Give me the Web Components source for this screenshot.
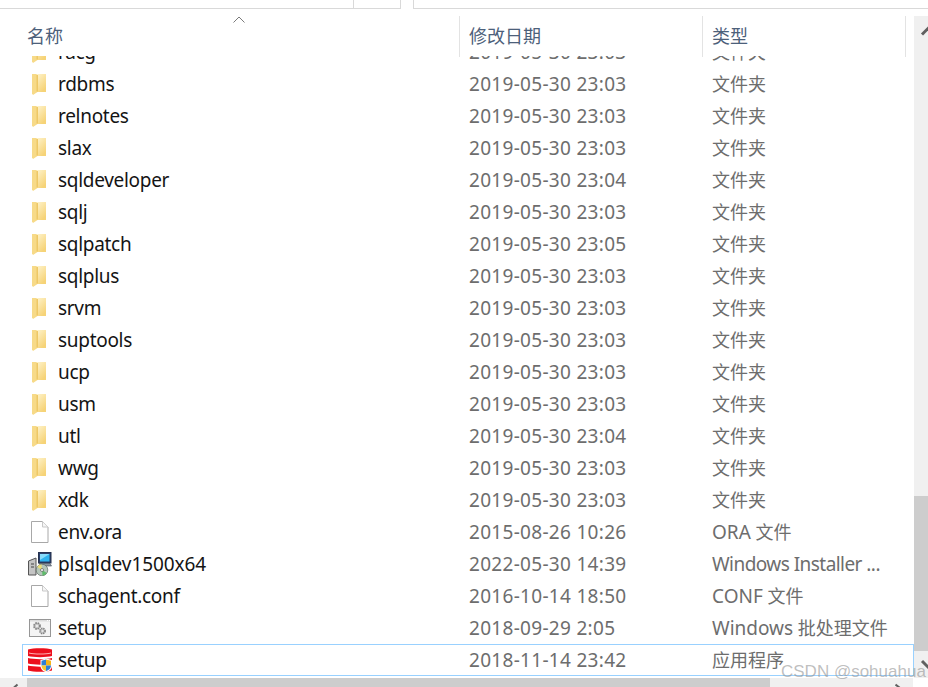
<!DOCTYPE html>
<html>
<head>
<meta charset="utf-8">
<style>
  html, body { margin: 0; padding: 0; background: #fff; }
  body { width: 928px; height: 687px; overflow: hidden; font-family: "Noto Sans", "Noto Sans CJK SC", sans-serif; }
</style>
</head>
<body>
<file-explorer></file-explorer>

<script>
// icons used by the rows, all 24x24
const ICONS = {
  folder: `<svg width="24" height="24" viewBox="0 0 24 24">
    <defs><linearGradient id="f" x1="0" x2=".6" y1="0" y2="1"><stop offset="0" stop-color="#fef3cb"/><stop offset="1" stop-color="#f6d377"/></linearGradient></defs>
    <path d="M9 2 H18 V20 H9Z" fill="url(#f)"/>
    <path d="M4 2 H8.500 L9.500 4 V20 L5 23 L4 21.500Z" fill="#f7da88"/>
    <path d="M8.500 3 H10 V19.500 H8.500Z" fill="#eec866"/>
  </svg>`,
  file: `<svg width="24" height="24" viewBox="0 0 24 24">
    <path d="M3.500 1.500 H14.500 L20 7 V22.500 H3.500Z" fill="#fff" stroke="#a8a8a8"/>
    <path d="M14.500 1.500 V7 H20" fill="#f6f6f6" stroke="#c8c8c8"/>
  </svg>`,
  installer: `<svg width="24" height="24" viewBox="0 0 24 24">
    <path d="M.5 9 L8 6 V23 H.5Z" fill="#c4c4c4" stroke="#555"/>
    <path d="M3 12 H6 M3 15 H6" stroke="#444"/>
    <rect x="10.500" y=".5" width="12.500" height="10.500" fill="#2a3f6b" stroke="#26324f"/>
    <rect x="12" y="2" width="9.500" height="7.500" fill="#2fb3ee"/>
    <path d="M12 2 H21.500 L12 8Z" fill="#86dcfb"/>
    <path d="M11 11.500 H22 L23.500 14 H14Z" fill="#8e98a4" stroke="#3f4a58" stroke-width=".6"/>
    <circle cx="14" cy="18" r="5.800" fill="#b5c6ba" stroke="#5e6c64" stroke-width=".7"/>
    <path d="M14 18 L9.200 15 A5.800 5.800 0 0 1 13.500 12.300Z" fill="#e9de79"/>
    <path d="M14 18 L18.800 21 A5.800 5.800 0 0 1 14.500 23.700Z" fill="#5fbb6a"/>
    <circle cx="14" cy="18" r="1.500" fill="#fff" stroke="#444" stroke-width=".6"/>
  </svg>`,
  batch: `<svg width="24" height="24" viewBox="0 0 24 24">
    <rect x="1.500" y="3.500" width="21" height="17" fill="#f4f4f4" stroke="#969696"/>
    <path d="M2 4 H22 V5.500 H2Z" fill="#dcdcdc"/>
    <path d="M19 4.500 H22" stroke="#fff" stroke-dasharray="1 1"/>
    <circle cx="9" cy="10" r="3" fill="#cacaca" stroke="#858585" stroke-width="1.800" stroke-dasharray="1.600 .8"/>
    <circle cx="9" cy="10" r="1" fill="#f4f4f4"/>
    <circle cx="14.500" cy="15" r="2.600" fill="#cacaca" stroke="#858585" stroke-width="1.600" stroke-dasharray="1.400 .7"/>
    <circle cx="14.500" cy="15" r=".8" fill="#f4f4f4"/>
  </svg>`,
  db: `<svg width="24" height="24" viewBox="0 0 24 24">
    <path d="M0 1.500 C5 -.3 19 -.3 24 1.500 V8 C19 9.500 5 9.500 0 8Z" fill="#ec0f1c"/>
    <path d="M1 4.500 C6 5.800 18 5.800 23 4.500 V5.500 C18 6.800 6 6.800 1 5.500Z" fill="#ffb0b0"/>
    <path d="M0 10 C5 11.500 19 11.500 24 10 V15.500 C19 17 5 17 0 15.500Z" fill="#ec0f1c"/>
    <path d="M0 17.500 C5 19 19 19 24 17.500 V22.500 C19 24.300 5 24.300 0 22.500Z" fill="#ec0f1c"/>
    <path d="M12.500 12 L18 10.500 L24 12 V18 C24 21 21 23.500 18 24 C15 23.500 12.500 21 12.500 18Z" fill="#fff"/>
    <path d="M13.500 12.800 L18 11.500 V17.500 H13.500Z" fill="#2f7fd6"/>
    <path d="M18 11.500 L23 12.800 V17.500 H18Z" fill="#f6b318"/>
    <path d="M13.500 17.500 H18 V23 C15.500 22.500 13.500 20.500 13.500 17.500Z" fill="#f8c832"/>
    <path d="M18 17.500 H23 C23 20.500 20.500 22.500 18 23Z" fill="#2f7fd6"/>
  </svg>`
};

class TopStrip extends HTMLElement {
  constructor() {
    super();
    this.attachShadow({ mode: "open" }).innerHTML = `
      <style>
        :host { display: flex; height: 9px; box-sizing: border-box; gap: 12px; }
        .box { height: 9px; box-sizing: border-box; border: 1px solid #d9d9d9; border-top: 0; }
        .left { width: 401px; display: flex; justify-content: flex-end; border-left: 0; }
        .left i { display: block; width: 46px; border-left: 1px solid #d9d9d9; }
        .right { flex: 1; border-right: 0; }
      </style>
      <div class="box left"><i></i></div>
      <div class="box right"></div>`;
  }
}

class ColHeader extends HTMLElement {
  constructor() {
    super();
    this.attachShadow({ mode: "open" }).innerHTML = `
      <style>
        :host { display: block; height: 40px; position: relative; color: #4c607a; font-size: 18px; }
        .row { display: grid; grid-template-columns: 460px 243px 203px; height: 40px; }
        .c { border-right: 1px solid #e3e3e3; box-sizing: border-box; line-height: 41px; padding-left: 9px; white-space: nowrap; }
        .c:first-child { padding-left: 27px; }
        .caret { position: absolute; left: 233px; top: 0; }
      </style>
      <svg class="caret" width="12" height="8" viewBox="0 0 12 8"><path d="M.5 6.500 L6 1 L11.500 6.500" fill="none" stroke="#7a7a7a"/></svg>
      <div class="row">
        <div class="c">名称</div>
        <div class="c">修改日期</div>
        <div class="c">类型</div>
      </div>`;
  }
}

class FileRow extends HTMLElement {
  constructor() {
    super();
    const icon = ICONS[this.getAttribute("icon") || "folder"];
    // latin runs of the type column are a bit bigger than the CJK ones
    const type = (this.getAttribute("t") || "").replace(/[A-Za-z. ]*[A-Za-z.]/g, m => `<span class="lat">${m}</span>`);
    const nameLs = this.getAttribute("ls") || "-0.3px";
    const typeLs = this.getAttribute("tls") || "0";
    this.attachShadow({ mode: "open" }).innerHTML = `
      <style>
        :host { display: block; height: 32px; }
        .row { display: grid; grid-template-columns: 35px 411px 243px 1fr; height: 32px; margin-left: 22px; box-sizing: border-box; align-items: center; line-height: 30px; white-space: nowrap; border: 1px solid transparent; }
        :host([selected]) .row { border-color: #99d1ff; }
        .ic { display: flex; align-items: center; height: 30px; padding-left: 5px; }
        .name { color: #141414; letter-spacing: ${nameLs}; }
        .date, .type { color: #6d6d6d; }
        .date { letter-spacing: .3px; }
        .type { font-size: 18px; }
        .lat { font-size: 19px; letter-spacing: ${typeLs}; }
      </style>
      <div class="row">
        <span class="ic">${icon}</span>
        <span class="name">${this.getAttribute("n") || ""}</span>
        <span class="date">${this.getAttribute("d") || ""}</span>
        <span class="type">${type}</span>
      </div>`;
  }
}

class VScrollbar extends HTMLElement {
  constructor() {
    super();
    // the arrows are cut by the edge of the window
    this.attachShadow({ mode: "open" }).innerHTML = `
      <style>
        :host { display: flex; flex-direction: column; width: 14px; background: #f0f0f0; overflow: hidden; }
        svg { display: block; flex: none; }
        .gap { height: 460px; flex: none; }
        .thumb { height: 155px; background: #cdcdcd; flex: none; }
      </style>
      <svg width="14" height="20" viewBox="0 0 14 20"><path d="M8 18.500 L15 11.500" fill="none" stroke="#606060" stroke-width="3"/></svg>
      <div class="gap"></div>
      <div class="thumb"></div>
      <svg width="14" height="20" viewBox="0 0 14 20"><path d="M8 10 L15 17" fill="none" stroke="#606060" stroke-width="3"/></svg>`;
  }
}

class HScrollbar extends HTMLElement {
  constructor() {
    super();
    this.attachShadow({ mode: "open" }).innerHTML = `
      <style>
        :host { display: flex; height: 9px; background: #f0f0f0; width: 913px; overflow: hidden; }
        .end { display: flex; flex: none; align-items: flex-start; }
        .lead { width: 27px; padding-left: 13px; box-sizing: border-box; }
        .tail { flex: 1; padding-left: 125px; }
        .thumb { width: 743px; background: #cdcdcd; flex: none; }
      </style>
      <div class="end lead"><svg width="6" height="9" viewBox="0 0 6 9"><path d="M4.500 6.500 L.5 10" fill="none" stroke="#606060" stroke-width="2"/></svg></div>
      <div class="thumb"></div>
      <div class="end tail"><svg width="7" height="9" viewBox="0 0 7 9"><path d="M.5 6.500 L5 10" fill="none" stroke="#606060" stroke-width="2"/></svg></div>`;
  }
}

const ROWS = [
  ["racg", "2019-05-30 23:03"],
  ["rdbms", "2019-05-30 23:03"], ["relnotes", "2019-05-30 23:03"], ["slax", "2019-05-30 23:03"],
  ["sqldeveloper", "2019-05-30 23:04"], ["sqlj", "2019-05-30 23:03"], ["sqlpatch", "2019-05-30 23:05"],
  ["sqlplus", "2019-05-30 23:03"], ["srvm", "2019-05-30 23:03"], ["suptools", "2019-05-30 23:03"],
  ["ucp", "2019-05-30 23:03"], ["usm", "2019-05-30 23:03"], ["utl", "2019-05-30 23:04"],
  ["wwg", "2019-05-30 23:03"], ["xdk", "2019-05-30 23:03"]
];

class FileExplorer extends HTMLElement {
  constructor() {
    super();
    const folders = ROWS.map(r => `<file-row n="${r[0]}" d="${r[1]}" t="文件夹"></file-row>`).join("");
    this.attachShadow({ mode: "open" }).innerHTML = `
      <style>
        :host { display: flex; flex-direction: column; width: 928px; height: 687px; position: relative; font-size: 19px; overflow: hidden; }
        .spacer { height: 7px; flex: none; }
        .main { display: flex; height: 662px; flex: none; }
        .pane { width: 914px; display: flex; flex-direction: column; overflow: hidden; }
        .list { flex: 1; overflow: hidden; }
        .list .inner { margin-top: -20px; }
        .mark { position: absolute; left: 781px; top: 661px; font: 17px/22px "Liberation Sans", sans-serif; color: rgba(150,150,150,.62); white-space: nowrap; }
      </style>
      <top-strip></top-strip>
      <div class="spacer"></div>
      <div class="main">
        <div class="pane">
          <col-header></col-header>
          <div class="list"><div class="inner">
            ${folders}
            <file-row icon="file" n="env.ora" d="2015-08-26 10:26" t="ORA 文件"></file-row>
            <file-row icon="installer" ls="-0.07px" tls="-0.55px" n="plsqldev1500x64" d="2022-05-30 14:39" t="Windows Installer ..."></file-row>
            <file-row icon="file" n="schagent.conf" d="2016-10-14 18:50" t="CONF 文件"></file-row>
            <file-row icon="batch" n="setup" d="2018-09-29 2:05" t="Windows 批处理文件"></file-row>
            <file-row icon="db" n="setup" d="2018-11-14 23:42" t="应用程序" selected></file-row>
          </div></div>
        </div>
        <v-scrollbar></v-scrollbar>
      </div>
      <h-scrollbar></h-scrollbar>
      <div class="mark">CSDN @sohuahua</div>`;
  }
}

customElements.define("top-strip", TopStrip);
customElements.define("col-header", ColHeader);
customElements.define("file-row", FileRow);
customElements.define("v-scrollbar", VScrollbar);
customElements.define("h-scrollbar", HScrollbar);
customElements.define("file-explorer", FileExplorer);
</script>
</body>
</html>
